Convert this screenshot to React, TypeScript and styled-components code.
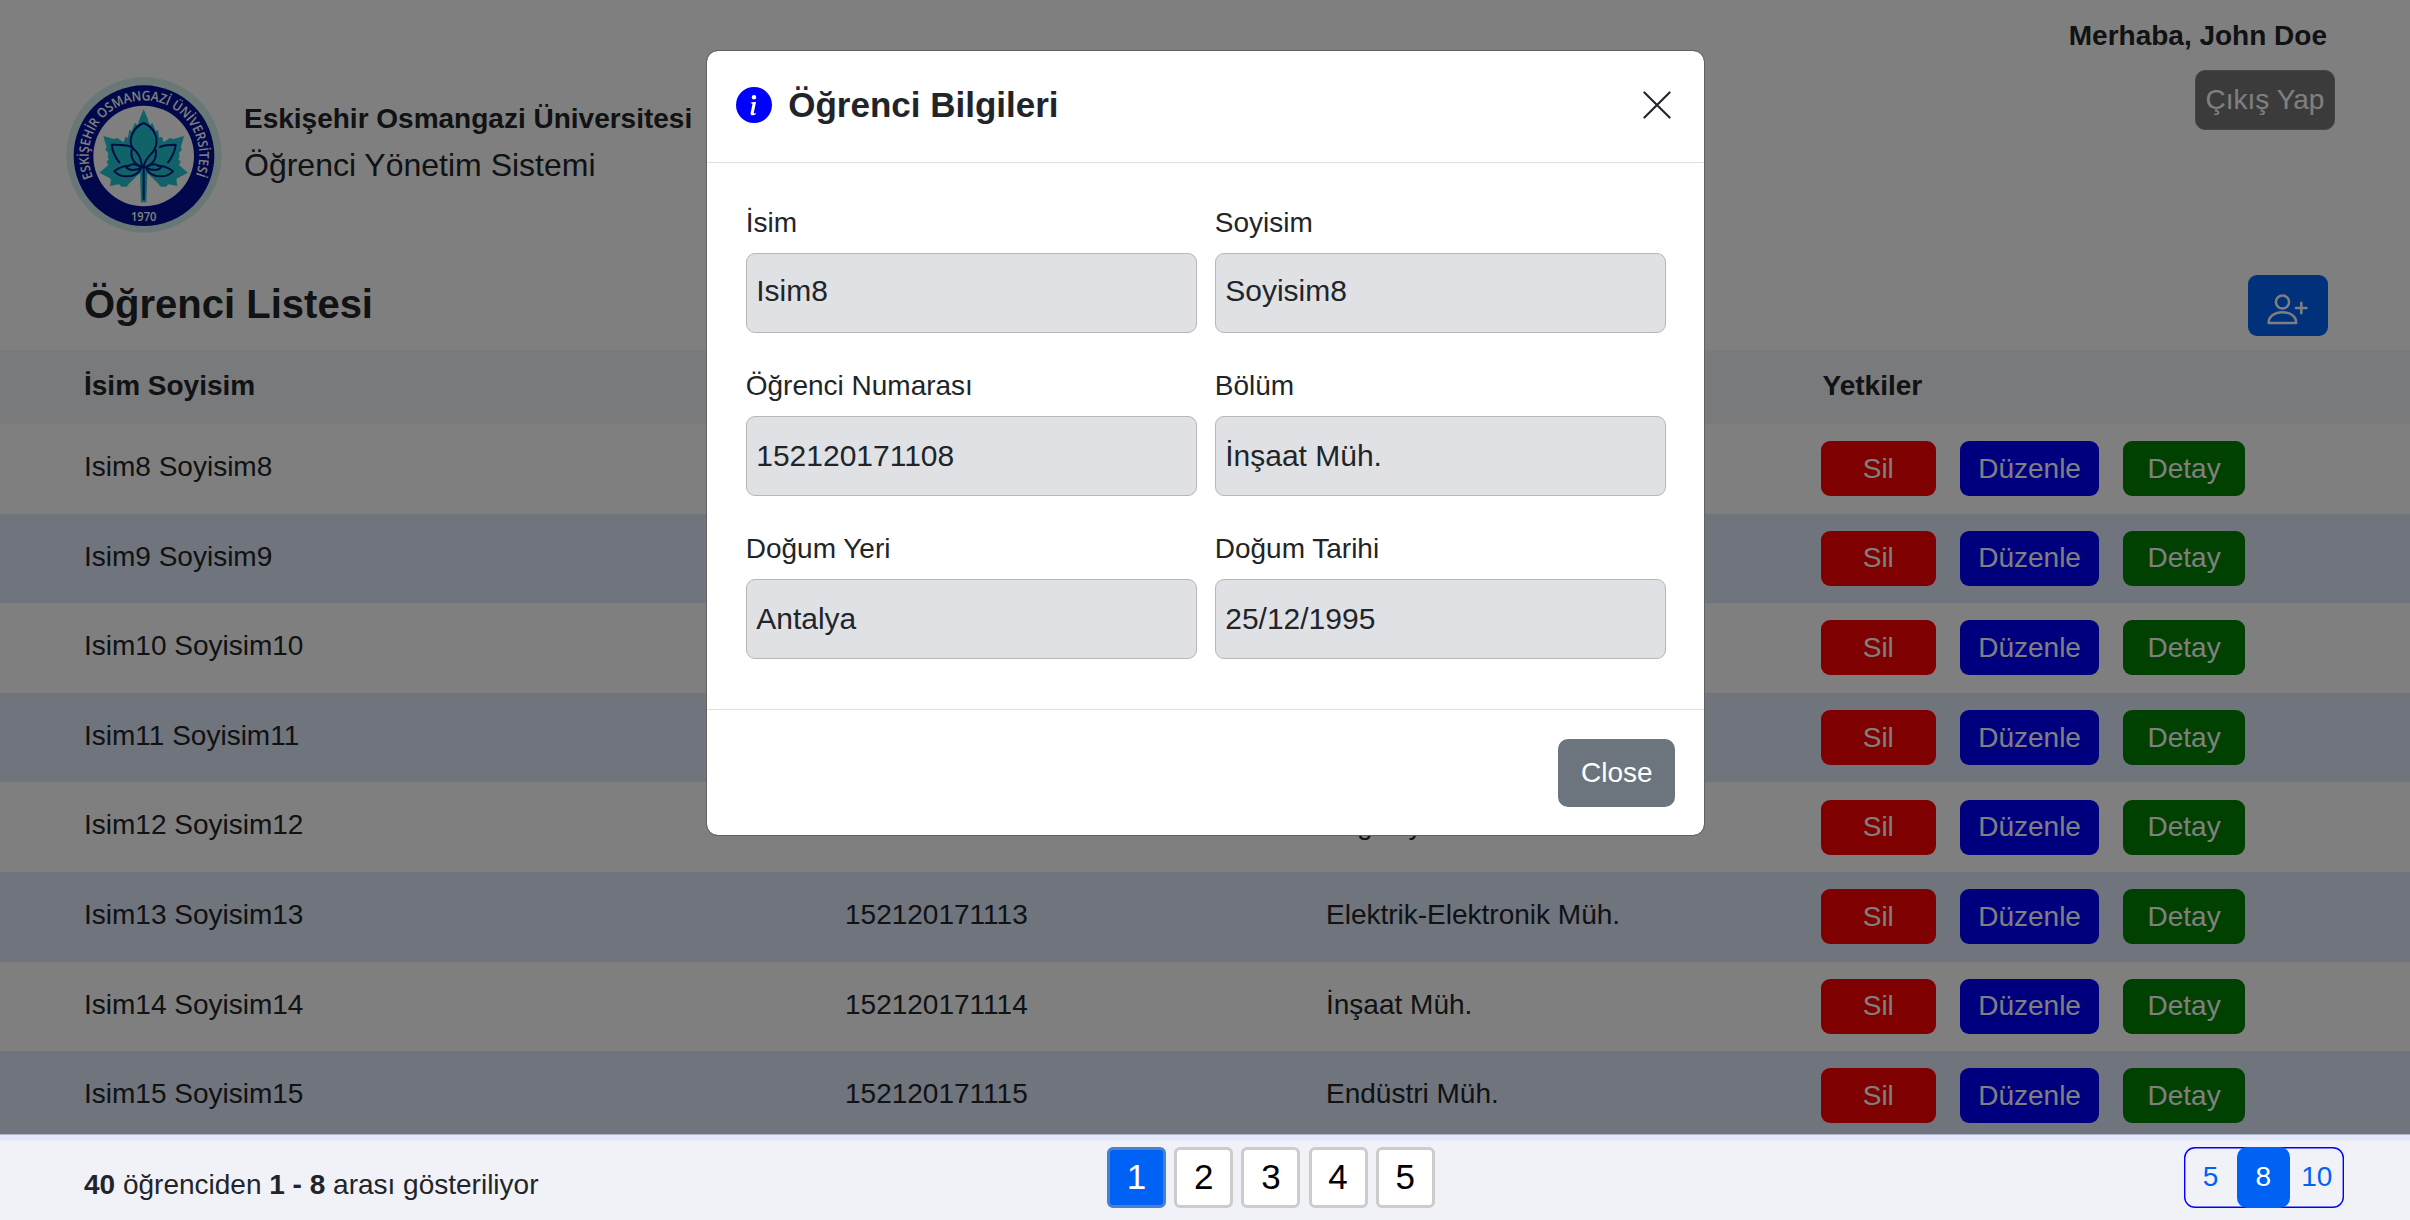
import React from "react";
import styled, { createGlobalStyle } from "styled-components";

const GlobalStyle = createGlobalStyle`
  *, *::before, *::after { box-sizing: border-box; }
  html, body { margin: 0; padding: 0; background: #fff; }
  body, button, input {
    font-family: "Liberation Sans", Arial, Helvetica, sans-serif;
    font-size: 28px;
    color: #212529;
  }
  body { overflow: hidden; }
`;

const Page = styled.div`
  position: relative;
  display: flex;
  flex-direction: column;
  width: 2410px;
  height: 1220px;
  overflow: hidden;
`;

const Header = styled.header`
  display: flex;
  justify-content: space-between;
  height: 258px;
  padding: 0 75px 0 66px;
`;

const Brand = styled.div`
  display: flex;
  gap: 22px;
  padding-top: 77px;
`;

const BrandText = styled.div`
  padding-top: 19px;
`;

const University = styled.div`
  font-weight: 700;
  line-height: 46px;
`;

const SystemName = styled.div`
  font-size: 32px;
  line-height: 46px;
`;

const Account = styled.div`
  display: flex;
  flex-direction: column;
  align-items: flex-end;
  gap: 14px;
  padding-top: 16px;
`;

const Greeting = styled.div`
  padding-right: 8px;
  font-weight: 700;
  line-height: 40px;
`;

const LogoutButton = styled.button`
  width: 140px;
  height: 60px;
  padding: 0 0 1px;
  border: 1px solid #8a8a8a;
  border-radius: 10px;
  background: #767676;
  color: #fff;
  white-space: nowrap;
`;

const TitleBar = styled.div`
  display: flex;
  justify-content: space-between;
  height: 92px;
  padding: 17px 82px 0 84px;
`;

const Title = styled.h1`
  margin: 0;
  font-size: 40px;
  line-height: 58px;
`;

const AddButton = styled.button`
  display: flex;
  align-items: center;
  justify-content: center;
  width: 80px;
  height: 61px;
  padding: 8px 2px 0 0;
  border: 0;
  border-radius: 9px;
  background: #0062f5;
  color: #fff;
`;

const columns = "761px 481px 494.6px 1fr";

const TableHead = styled.div`
  display: grid;
  grid-template-columns: ${columns};
  flex: none;
  height: 74px;
  padding-left: 84px;
  background: #f2f4f6;
  font-weight: 700;
  line-height: 71px;
`;

const ActionsHead = styled.div`
  padding-left: 2px;
`;

const TableBody = styled.div`
  flex: 1;
  min-height: 0;
  overflow: hidden;
`;

const Row = styled.div<{ $striped: boolean }>`
  display: grid;
  grid-template-columns: ${columns};
  height: 89.6px;
  padding-left: 84px;
  background: ${(p) => (p.$striped ? "#e0e8fa" : "#fff")};
`;

const Cell = styled.div`
  line-height: 86.4px;
`;

const Actions = styled.div`
  display: flex;
  align-items: center;
  gap: 24px;
`;

const ActionButton = styled.button<{ $color: string; $width: number }>`
  width: ${(p) => p.$width}px;
  height: 55px;
  padding: 0;
  border: 0;
  border-radius: 9px;
  background: ${(p) => p.$color};
  color: #fff;
`;

const Footer = styled.footer`
  position: relative;
  z-index: 3;
  display: grid;
  grid-template-columns: 1023px auto 1fr;
  flex: none;
  height: 86px;
  padding: 6px 66px 0 84px;
  border-top: 1px solid #b1b6c8;
  background: linear-gradient(#e2e7fb 0 5px, #f1f2f8 6px);
`;

const Summary = styled.div`
  padding-top: 24px;
  line-height: 40px;
`;

const Pages = styled.nav`
  display: flex;
  gap: 8.2px;
  padding-top: 6px;
`;

const PageButton = styled.button<{ $active: boolean }>`
  width: 59px;
  height: 61px;
  padding: 0 0 1px;
  border: 3px solid ${(p) => (p.$active ? "#4a80cc" : "#ccc")};
  border-radius: 6px;
  background: ${(p) => (p.$active ? "#0062f5" : "#fff")};
  color: ${(p) => (p.$active ? "#fff" : "#000")};
  font-size: 35px;
`;

const SizeGroup = styled.div`
  display: grid;
  grid-template-columns: 53px 52.5px 1fr;
  justify-self: end;
  width: 160px;
  height: 61px;
  margin-top: 6px;
  border-radius: 11px;
  box-shadow: inset 0 0 0 1.4px #0000ff;
`;

const SizeButton = styled.button<{ $active: boolean }>`
  padding: 0 0 2px;
  border: 0;
  border-radius: 10px;
  background: ${(p) => (p.$active ? "#0062f5" : "transparent")};
  color: ${(p) => (p.$active ? "#fff" : "#0062f5")};
`;

const Overlay = styled.div`
  position: absolute;
  inset: 0;
  z-index: 2;
  display: flex;
  align-items: flex-start;
  justify-content: center;
  padding: 50px 0 0 1px;
  background: rgba(0, 0, 0, 0.5);
`;

const Dialog = styled.div`
  width: 998.6px;
  height: 786px;
  border: 1px solid #616161;
  border-radius: 12px;
  background: #fff;
  background-clip: padding-box;
`;

const DialogHeader = styled.div`
  display: flex;
  align-items: center;
  height: 112px;
  padding: 0 32.5px 4px 29px;
  border-bottom: 1px solid #dee2e6;
`;

const DialogTitle = styled.h2`
  flex: 1;
  margin: 0 0 0 16px;
  font-size: 35px;
`;

const CloseIconButton = styled.button`
  display: flex;
  padding: 0;
  border: 0;
  background: none;
`;

const DialogBody = styled.div`
  display: grid;
  grid-template-columns: 451px 451px;
  grid-auto-rows: 163.1px;
  column-gap: 18px;
  height: 547px;
  padding: 39px 38px 0 38.5px;
  border-bottom: 1px solid #dee2e6;
`;

const Field = styled.label`
  display: block;
`;

const FieldName = styled.span`
  display: block;
  height: 51px;
  line-height: 41px;
`;

const Input = styled.input<{ $raised: boolean }>`
  display: block;
  width: 451px;
  height: 80px;
  padding: 0 9.5px ${(p) => (p.$raised ? 5 : 1)}px;
  border: 1.25px solid #bab5b6;
  border-radius: 9px;
  background: #e0e1e5;
  font-size: 30px;
`;

const DialogFooter = styled.div`
  display: flex;
  justify-content: flex-end;
  padding: 29px 28.5px 0;
`;

const CloseButton = styled.button`
  width: 117px;
  height: 68px;
  padding: 0 0 1px;
  border: 0;
  border-radius: 10px;
  background: #6c757d;
  color: #fff;
`;

const leafHalf =
  "L262,142 L269,164 L277,158 L281,166 L287,183 L294,178 L298,202 L306,199 L311,216 L330,203 L341,206 L372,197 L362,232 L367,237 L357,248 L359,260 L355,266 L362,274 L357,284 L384,307 L358,321 L349,326 L352,347 L325,342 L318,349 L302,349 L293,338 L262,308 L259,396";
const leafOtherHalf =
  "L243,396 L240,308 L209,338 L200,349 L184,349 L177,342 L150,347 L153,326 L144,321 L118,307 L145,284 L140,274 L147,266 L143,260 L145,248 L135,237 L140,232 L130,197 L161,206 L172,203 L191,216 L196,199 L204,202 L208,178 L215,183 L221,166 L225,158 L233,164 L240,142 Z";

function Logo() {
  return (
    <svg width="156" height="156" viewBox="18 20 468 468">
      <defs>
        <path id="ring-top" d="M101,325 A166,166 0 1 1 403,325" />
      </defs>
      <circle cx="252" cy="254" r="233" fill="#d4eeee" />
      <circle cx="252" cy="256" r="211" fill="#001096" />
      <circle cx="251" cy="257" r="151" fill="#fff" />
      <path d={`M251,117 ${leafHalf} ${leafOtherHalf}`} fill="#20c8d2" />
      <g fill="none" stroke="#001a86" strokeWidth="6" strokeLinecap="round" strokeLinejoin="round">
        <path d="M219,236 C203,211 216,172 251,158 C286,172 299,211 283,238 C274,255 254,262 251,291" />
        <path d="M178,276 C164,259 157,242 155,223 C181,223 206,222 217,232 C237,248 243,264 246,289" />
        <path d="M324,276 C338,259 345,242 347,223 C326,223 313,224 300,230" />
        <path d="M215,239 C211,262 222,280 245,291" />
        <path d="M287,239 C291,262 280,280 257,291" />
        <path d="M242,289 C223,278 207,281 199,292 C211,302 227,300 243,293 C239,309 217,319 198,318 C184,318 172,312 163,303 C175,293 190,286 209,286" />
        <path d="M260,289 C279,278 295,281 303,292 C291,302 275,300 259,293 C263,309 285,319 304,318 C318,318 330,312 339,303 C327,293 312,286 293,286" />
        <path d="M251,292 V386" />
      </g>
      <text fill="#fff" fontFamily="'Open Sans', 'Noto Sans', sans-serif" fontSize="40" fontWeight="600">
        <textPath href="#ring-top" startOffset="4" textLength="648" lengthAdjust="spacingAndGlyphs">
          ESKİŞEHİR OSMANGAZİ ÜNİVERSİTESİ
        </textPath>
      </text>
      <text
        x="251"
        y="451"
        fill="#fff"
        fontFamily="'Open Sans', 'Noto Sans', sans-serif"
        fontSize="37"
        fontWeight="600"
        textAnchor="middle"
        textLength="76"
        lengthAdjust="spacingAndGlyphs"
      >
        1970
      </text>
    </svg>
  );
}

function PersonPlusIcon() {
  return (
    <svg width="41" height="31" viewBox="0 0 41 31" fill="none" stroke="currentColor" strokeWidth="2.5" strokeLinecap="round" strokeLinejoin="round">
      <circle cx="15.5" cy="8" r="6.6" />
      <path d="M1.6,28.9 C1.6,22 8,18.3 15.5,18.3 C23,18.3 29.2,22 29.2,28.9 Z" />
      <path d="M29,14 H39.5 M34.3,8.8 V19.3" />
    </svg>
  );
}

function InfoIcon() {
  return (
    <svg width="36" height="36" viewBox="0 0 16 16" fill="#0000ff">
      <path d="M8 16A8 8 0 1 0 8 0a8 8 0 0 0 0 16m.93-9.412-1 4.705c-.07.34.029.533.304.533.194 0 .487-.07.686-.246l-.088.416c-.287.346-.92.598-1.465.598-.703 0-1.002-.422-.808-1.319l.738-3.468c.064-.293.006-.399-.287-.47l-.451-.081.082-.381 2.29-.287zM8 5.5a1 1 0 1 1 0-2 1 1 0 0 1 0 2" />
    </svg>
  );
}

function CrossIcon() {
  return (
    <svg width="28" height="28" viewBox="0 0 28 28" fill="none" stroke="#212529" strokeWidth="2.1" strokeLinecap="round">
      <path d="M1.4,1.4 L26.6,26.6 M26.6,1.4 L1.4,26.6" />
    </svg>
  );
}

const students = [
  { n: 8, dept: "İnşaat Müh." },
  { n: 9, dept: "Endüstri Müh." },
  { n: 10, dept: "Makine Müh." },
  { n: 11, dept: "Endüstri Müh." },
  { n: 12, dept: "Bilgisayar Müh." },
  { n: 13, dept: "Elektrik-Elektronik Müh." },
  { n: 14, dept: "İnşaat Müh." },
  { n: 15, dept: "Endüstri Müh." },
];

const fields = [
  ["İsim", "Isim8"],
  ["Soyisim", "Soyisim8"],
  ["Öğrenci Numarası", "152120171108"],
  ["Bölüm", "İnşaat Müh."],
  ["Doğum Yeri", "Antalya"],
  ["Doğum Tarihi", "25/12/1995"],
];

export default function App() {
  return (
    <Page>
      <GlobalStyle />
      <Header>
        <Brand>
          <Logo />
          <BrandText>
            <University>Eskişehir Osmangazi Üniversitesi</University>
            <SystemName>Öğrenci Yönetim Sistemi</SystemName>
          </BrandText>
        </Brand>
        <Account>
          <Greeting>Merhaba, John Doe</Greeting>
          <LogoutButton>Çıkış Yap</LogoutButton>
        </Account>
      </Header>
      <TitleBar>
        <Title>Öğrenci Listesi</Title>
        <AddButton aria-label="Öğrenci Ekle">
          <PersonPlusIcon />
        </AddButton>
      </TitleBar>
      <TableHead>
        <div>İsim Soyisim</div>
        <div>Öğrenci No</div>
        <div>Bölüm</div>
        <ActionsHead>Yetkiler</ActionsHead>
      </TableHead>
      <TableBody>
        {students.map((s, i) => (
          <Row key={s.n} $striped={i % 2 === 1}>
            <Cell>{`Isim${s.n} Soyisim${s.n}`}</Cell>
            <Cell>{152120171100 + s.n}</Cell>
            <Cell>{s.dept}</Cell>
            <Actions>
              <ActionButton $color="#ff0000" $width={115.4}>Sil</ActionButton>
              <ActionButton $color="#0000ff" $width={139.2}>Düzenle</ActionButton>
              <ActionButton $color="#008000" $width={121.8}>Detay</ActionButton>
            </Actions>
          </Row>
        ))}
      </TableBody>
      <Footer>
        <Summary>
          <b>40</b> öğrenciden <b>1 - 8</b> arası gösteriliyor
        </Summary>
        <Pages>
          {[1, 2, 3, 4, 5].map((p) => (
            <PageButton key={p} $active={p === 1}>{p}</PageButton>
          ))}
        </Pages>
        <SizeGroup>
          {[5, 8, 10].map((s) => (
            <SizeButton key={s} $active={s === 8}>{s}</SizeButton>
          ))}
        </SizeGroup>
      </Footer>
      <Overlay>
        <Dialog role="dialog">
          <DialogHeader>
            <InfoIcon />
            <DialogTitle>Öğrenci Bilgileri</DialogTitle>
            <CloseIconButton aria-label="Close">
              <CrossIcon />
            </CloseIconButton>
          </DialogHeader>
          <DialogBody>
            {fields.map(([name, value], i) => (
              <Field key={name}>
                <FieldName>{name}</FieldName>
                <Input value={value} $raised={i < 2} readOnly />
              </Field>
            ))}
          </DialogBody>
          <DialogFooter>
            <CloseButton>Close</CloseButton>
          </DialogFooter>
        </Dialog>
      </Overlay>
    </Page>
  );
}
